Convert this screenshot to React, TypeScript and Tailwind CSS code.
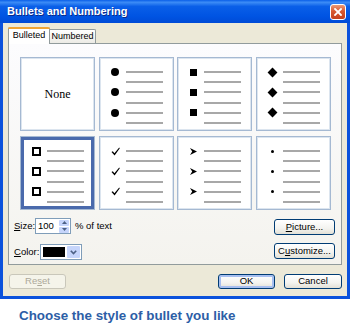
import React from "react";

type B = "none" | "dot" | "square" | "diamond" | "hollow" | "check" | "arrow" | "small";

function Bullet({ kind }: { kind: B }) {
  switch (kind) {
    case "dot":
      return <div className="w-[8px] h-[8px] rounded-full bg-black" />;
    case "square":
      return <div className="w-[7px] h-[7px] bg-black" />;
    case "diamond":
      return <div className="w-[7px] h-[7px] bg-black rotate-45" />;
    case "hollow":
      return <div className="w-[9px] h-[9px] border-2 border-black" />;
    case "check":
      return (
        <svg width="9" height="9" viewBox="0 0 9 9">
          <path d="M0.5 5 L1.8 4.2 L3.4 6.2 L8.2 0.6 L8.8 1.2 L3.6 8.6 Z" fill="#000" />
        </svg>
      );
    case "arrow":
      return (
        <svg width="7" height="7" viewBox="0 0 7 7">
          <path d="M0 0 L7 3.5 L0 7 L2.2 3.5 Z" fill="#000" />
        </svg>
      );
    case "small":
      return <div className="w-[3px] h-[3px] rounded-full bg-black" />;
    default:
      return null;
  }
}

function Cell({ kind, selected }: { kind: B; selected?: boolean }) {
  const base = "w-[75px] h-[74px] bg-white border border-[#a5b9d2]";
  const sh = selected
    ? "shadow-[inset_0_0_0_3px_#4a6aac]"
    : "shadow-[inset_0_0_0_1px_#dce5ef]";
  if (kind === "none")
    return (
      <div
        className={`${base} ${sh} flex items-center justify-center font-['Liberation_Serif',serif] text-[12px] text-black`}
      >
        None
      </div>
    );
  return (
    <div className={`${base} ${sh} pt-[9px] pl-[9.5px] flex flex-col`}>
      {[0, 1, 2, 3, 4, 5].map((i) => (
        <div key={i} className="h-[10.2px] flex items-center">
          <div className="w-[12px] flex justify-center">
            {i % 2 === 0 && <Bullet kind={kind} />}
          </div>
          <div className="ml-[4.5px] h-[2px] w-[37px] bg-[#a8a8a8]" />
        </div>
      ))}
    </div>
  );
}

function XPButton({
  children,
  className = "",
  def = false,
  disabled = false,
}: {
  children: React.ReactNode;
  className?: string;
  def?: boolean;
  disabled?: boolean;
}) {
  if (disabled)
    return (
      <div
        className={`flex items-center justify-center rounded-[3px] border border-[#c9c7ba] bg-[#f5f4ea] text-[#aca899] text-[9.5px] ${className}`}
      >
        {children}
      </div>
    );
  return (
    <div
      className={`flex items-center justify-center rounded-[3px] border border-[#003c74] bg-[linear-gradient(to_bottom,#ffffff_0%,#f3f3ef_60%,#e3e0d6_100%)] text-black text-[9.5px] ${
        def ? "shadow-[inset_0_0_0_2px_#a7bff0]" : ""
      } ${className}`}
    >
      {children}
    </div>
  );
}

export default function App() {
  return (
    <div className="w-[350px] h-[325px] bg-white font-['Liberation_Sans',Arial,sans-serif] overflow-hidden">
      <div className="w-[350px] h-[299px] flex flex-col bg-[#0b52dc]">
        {/* title bar */}
        <div className="h-[23px] shrink-0 flex items-center justify-between pl-[7px] pr-[4px] bg-[linear-gradient(to_bottom,#0a5fe8_0%,#3c8cf6_10%,#0a5fe8_28%,#0054e3_70%,#004bd6_100%)]">
          <span className="text-white font-bold text-[11px] [text-shadow:1px_1px_0_#0a2a8a]">
            Bullets and Numbering
          </span>
          <div className="w-[16px] h-[16px] rounded-[3px] border border-white bg-[linear-gradient(to_bottom,#eb9a78_0%,#d8582f_45%,#c4401c_100%)] flex items-center justify-center">
            <svg width="8" height="8" viewBox="0 0 8 8">
              <path d="M1 1 L7 7 M7 1 L1 7" stroke="#fff" strokeWidth="1.8" strokeLinecap="square" />
            </svg>
          </div>
        </div>

        {/* body */}
        <div className="flex-1 mx-[3px] mb-[3px] bg-[#ece9d8] flex flex-col pt-[4px] px-[5px]">
          {/* tabs */}
          <div className="h-[16px] flex items-start relative z-10">
            <div className="w-[42px] h-[17px] bg-white border-l border-r border-[#919b9c] rounded-t-[2px] flex flex-col">
              <div className="h-[2px] bg-[#f0a535] rounded-t-[2px] -mx-[1px]" />
              <div className="flex-1 flex items-center justify-center text-[9px] text-black pb-[1px]">
                Bulleted
              </div>
            </div>
            <div className="mt-[2px] w-[46px] h-[14px] border-t border-r border-[#919b9c] rounded-tr-[2px] bg-[linear-gradient(to_bottom,#ffffff,#ecebe5)] flex items-center justify-center text-[9px] text-black">
              Numbered
            </div>
          </div>

          {/* panel */}
          <div className="h-[222px] border border-[#919b9c] bg-[linear-gradient(to_bottom,#fcfcfe,#f4f3ee)] flex flex-col pt-[13px] pl-[5px] pr-[6px]">
            <div className="ml-[6px] grid grid-cols-[repeat(4,75px)] gap-x-[3.7px] gap-y-[5px]">
              <Cell kind="none" />
              <Cell kind="dot" />
              <Cell kind="square" />
              <Cell kind="diamond" />
              <Cell kind="hollow" selected />
              <Cell kind="check" />
              <Cell kind="arrow" />
              <Cell kind="small" />
            </div>

            <div className="mt-[8px] flex justify-between">
              <div className="flex flex-col gap-[10px] text-[9.5px] text-black">
                <div className="h-[16px] flex items-center">
                  <span className="w-[21px]">
                    <span className="underline">S</span>ize:
                  </span>
                  <div className="w-[36px] h-[16px] border border-[#7f9db9] bg-white flex items-center justify-between pl-[2px] pr-[1px]">
                    <span>100</span>
                    <div className="flex flex-col gap-[1px]">
                      <div className="w-[10px] h-[6px] rounded-[1px] bg-[#c6d5fb] flex items-center justify-center">
                        <svg width="5" height="3" viewBox="0 0 5 3">
                          <path d="M0 3 L2.5 0 L5 3 Z" fill="#4d6185" />
                        </svg>
                      </div>
                      <div className="w-[10px] h-[6px] rounded-[1px] bg-[#c6d5fb] flex items-center justify-center">
                        <svg width="5" height="3" viewBox="0 0 5 3">
                          <path d="M0 0 L2.5 3 L5 0 Z" fill="#4d6185" />
                        </svg>
                      </div>
                    </div>
                  </div>
                  <span className="ml-[4px]">% of text</span>
                </div>
                <div className="h-[16px] flex items-center">
                  <span className="w-[26px]">
                    <span className="underline">C</span>olor:
                  </span>
                  <div className="w-[42px] h-[16px] border border-[#7f9db9] bg-white flex items-center pl-[2px] pr-[1px] gap-[2px]">
                    <div className="w-[22px] h-[10px] bg-black" />
                    <div className="w-[13px] h-[12px] rounded-[1px] bg-[#c6d5fb] flex items-center justify-center">
                      <svg width="7" height="5" viewBox="0 0 7 5">
                        <path d="M0.8 0.8 L3.5 3.6 L6.2 0.8" stroke="#4d6185" strokeWidth="1.6" fill="none" />
                      </svg>
                    </div>
                  </div>
                </div>
              </div>
              <div className="flex flex-col gap-[8px] mt-[1px]">
                <XPButton className="w-[61px] h-[16px]">
                  <span>
                    <span className="underline">P</span>icture...
                  </span>
                </XPButton>
                <XPButton className="w-[61px] h-[16px]">
                  <span>
                    C<span className="underline">u</span>stomize...
                  </span>
                </XPButton>
              </div>
            </div>
          </div>

          {/* bottom buttons */}
          <div className="mt-[9px] h-[15px] flex items-center">
            <XPButton disabled className="ml-[1px] w-[57px] h-[15px]">
              <span>
                Re<span className="underline">s</span>et
              </span>
            </XPButton>
            <div className="flex-1" />
            <XPButton def className="w-[57px] h-[15px]">
              OK
            </XPButton>
            <XPButton className="ml-[9px] w-[58px] h-[15px]">Cancel</XPButton>
          </div>
        </div>
      </div>
      <div className="mt-[8.5px] pl-[19px] text-[13.4px] leading-[15px] font-bold text-[#2d5ea6]">
        Choose the style of bullet you like
      </div>
    </div>
  );
}
